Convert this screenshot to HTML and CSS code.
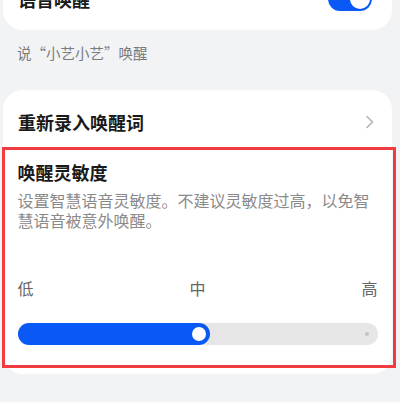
FILE: index.html
```html
<!DOCTYPE html>
<html lang="zh-CN">
<head>
<meta charset="utf-8">
<link rel="stylesheet" href="styles.css">
</head>
<body>
<div class="page">
  <div class="card card-top">
    <div class="row row-toggle">
      <span class="title">语音唤醒</span>
      <span class="toggle"><span class="knob"></span></span>
    </div>
  </div>
  <div class="hint">说“小艺小艺”唤醒</div>
  <div class="card card-main">
    <div class="row row-link">
      <span class="title">重新录入唤醒词</span>
      <svg class="chev" width="10" height="14" viewBox="0 0 10 14"><path d="M2 1.5 L7.5 7 L2 12.5" fill="none" stroke="#b4b4b4" stroke-width="1.6" stroke-linecap="round" stroke-linejoin="round"/></svg>
    </div>
    <div class="sens">
      <div class="title">唤醒灵敏度</div>
      <div class="desc">设置智慧语音灵敏度。不建议灵敏度过高，以免智慧语音被意外唤醒。</div>
      <div class="labels"><span>低</span><span>中</span><span>高</span></div>
      <div class="slider">
        <div class="fill"><span class="thumb"></span></div>
        <span class="dot"></span>
      </div>
    </div>
  </div>
</div>
</body>
</html>
```

FILE: styles.css
```css
html, body {
  margin: 0;
  padding: 0;
  background: #f1f3f5;
}
body {
  font-family: "Noto Sans CJK SC", "Noto Sans", sans-serif;
  width: 400px;
  height: 402px;
  overflow: hidden;
}
.page {
  padding-left: 3px;
  width: 389px;
}
.card {
  background: #fff;
  border-radius: 20px;
}
.card-top {
  margin-top: -32px;
  height: 62px;
}
.row {
  display: flex;
  align-items: center;
  justify-content: space-between;
  padding: 0 20px 0 15px;
}
.row-toggle {
  height: 62px;
}
.title {
  font-size: 18px;
  font-weight: 700;
  color: #1a1a1a;
  line-height: 24px;
}
.toggle {
  width: 44px;
  height: 24px;
  border-radius: 12px;
  background: #0a59f7;
  display: flex;
  align-items: center;
  justify-content: flex-end;
  padding-right: 2px;
  box-sizing: border-box;
}
.knob {
  width: 20px;
  height: 20px;
  border-radius: 50%;
  background: #fff;
}
.hint {
  font-size: 14.5px;
  color: #7a7a7a;
  line-height: 22px;
  padding: 12px 0 0 14px;
  height: 48px;
}
.card-main {
  padding-bottom: 6px;
}
.row-link {
  height: 57px;
  padding-top: 7px;
  padding-right: 17px;
  box-sizing: border-box;
}
.sens {
  margin: 0 -3.5px 0 -1px;
  border: 3.5px solid #f23b3f;
  padding: 10px 15px 20px 12.5px;
}
.desc {
  margin-top: 6px;
  font-size: 16px;
  line-height: 20px;
  color: #8a8a8a;
}
.labels {
  display: flex;
  justify-content: space-between;
  font-size: 16px;
  line-height: 22px;
  color: #666;
  margin-top: 47px;
}
.slider {
  margin-top: 24px;
  height: 22px;
  border-radius: 11px;
  background: #e6e6e6;
  width: 360px;
  display: flex;
  align-items: center;
  justify-content: space-between;
}
.fill {
  width: 192px;
  height: 22px;
  border-radius: 11px;
  background: #0a59f7;
  display: flex;
  align-items: center;
  justify-content: flex-end;
  padding-right: 4px;
  box-sizing: border-box;
}
.thumb {
  width: 14px;
  height: 14px;
  border-radius: 50%;
  background: #fff;
}
.dot {
  width: 4px;
  height: 4px;
  border-radius: 50%;
  background: #c4c4c4;
  margin-right: 9px;
}
```
